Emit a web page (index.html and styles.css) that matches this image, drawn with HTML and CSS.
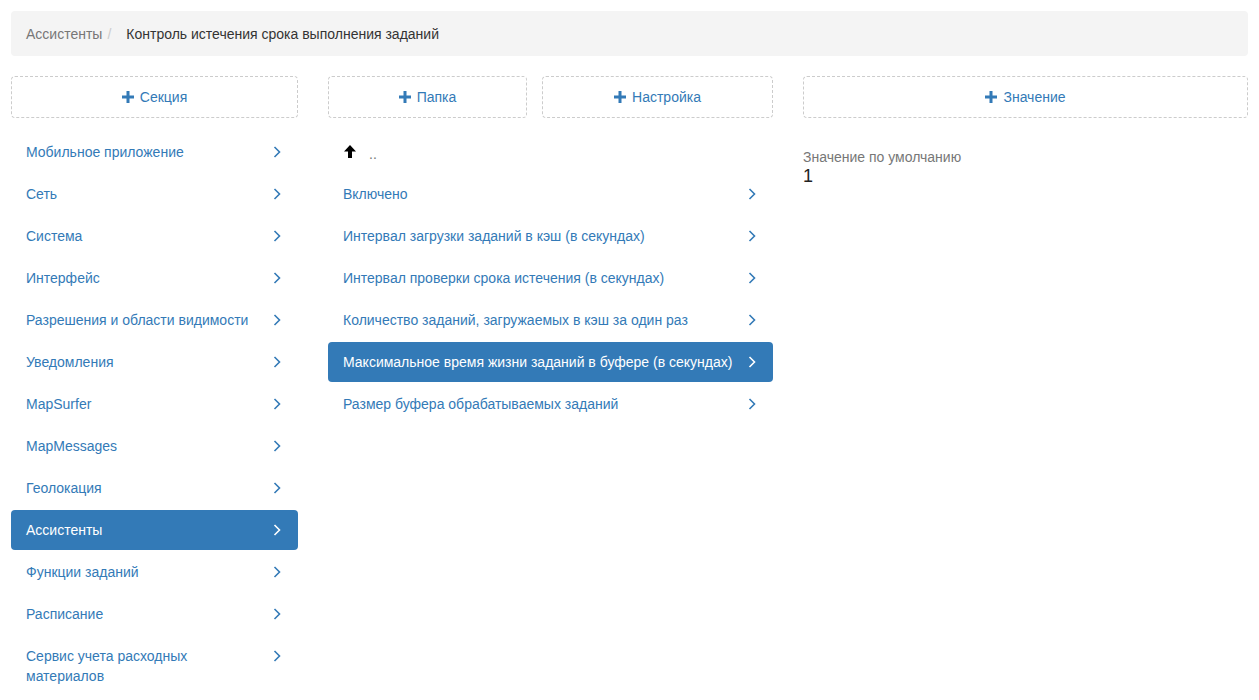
FILE: index.html
```html
<!DOCTYPE html>
<html lang="ru">
<head>
  <meta charset="UTF-8">
  <meta name="viewport" content="width=device-width, initial-scale=1.0">
  <title>Настройки</title>
  <link rel="stylesheet" href="styles.css">
</head>
<body>
  <div class="page">
    <ol class="breadcrumb">
      <li><a href="#">Ассистенты</a></li>
      <li class="active">Контроль истечения срока выполнения заданий</li>
    </ol>

    <div class="columns">
      <!-- sections -->
      <div class="column">
        <div class="actions">
          <a class="add-button" href="#"><svg class="plus" viewBox="0 0 12 12"><path d="M4.5 0h3v4.5H12v3H7.5V12h-3V7.5H0v-3h4.5z"/></svg>Секция</a>
        </div>
        <ul class="nav-list nav-list-narrow">
          <li><a href="#">Мобильное приложение<svg class="chevron" viewBox="0 0 8 12"><polyline points="1.5,1 6.5,6 1.5,11"/></svg></a></li>
          <li><a href="#">Сеть<svg class="chevron" viewBox="0 0 8 12"><polyline points="1.5,1 6.5,6 1.5,11"/></svg></a></li>
          <li><a href="#">Система<svg class="chevron" viewBox="0 0 8 12"><polyline points="1.5,1 6.5,6 1.5,11"/></svg></a></li>
          <li><a href="#">Интерфейс<svg class="chevron" viewBox="0 0 8 12"><polyline points="1.5,1 6.5,6 1.5,11"/></svg></a></li>
          <li><a href="#">Разрешения и области видимости<svg class="chevron" viewBox="0 0 8 12"><polyline points="1.5,1 6.5,6 1.5,11"/></svg></a></li>
          <li><a href="#">Уведомления<svg class="chevron" viewBox="0 0 8 12"><polyline points="1.5,1 6.5,6 1.5,11"/></svg></a></li>
          <li><a href="#">MapSurfer<svg class="chevron" viewBox="0 0 8 12"><polyline points="1.5,1 6.5,6 1.5,11"/></svg></a></li>
          <li><a href="#">MapMessages<svg class="chevron" viewBox="0 0 8 12"><polyline points="1.5,1 6.5,6 1.5,11"/></svg></a></li>
          <li><a href="#">Геолокация<svg class="chevron" viewBox="0 0 8 12"><polyline points="1.5,1 6.5,6 1.5,11"/></svg></a></li>
          <li class="active"><a href="#">Ассистенты<svg class="chevron" viewBox="0 0 8 12"><polyline points="1.5,1 6.5,6 1.5,11"/></svg></a></li>
          <li><a href="#">Функции заданий<svg class="chevron" viewBox="0 0 8 12"><polyline points="1.5,1 6.5,6 1.5,11"/></svg></a></li>
          <li><a href="#">Расписание<svg class="chevron" viewBox="0 0 8 12"><polyline points="1.5,1 6.5,6 1.5,11"/></svg></a></li>
          <li><a href="#">Сервис учета расходных материалов<svg class="chevron" viewBox="0 0 8 12"><polyline points="1.5,1 6.5,6 1.5,11"/></svg></a></li>
        </ul>
      </div>

      <!-- settings -->
      <div class="column">
        <div class="actions actions-split">
          <a class="add-button" href="#"><svg class="plus" viewBox="0 0 12 12"><path d="M4.5 0h3v4.5H12v3H7.5V12h-3V7.5H0v-3h4.5z"/></svg>Папка</a>
          <a class="add-button" href="#"><svg class="plus" viewBox="0 0 12 12"><path d="M4.5 0h3v4.5H12v3H7.5V12h-3V7.5H0v-3h4.5z"/></svg>Настройка</a>
        </div>
        <ul class="nav-list">
          <li class="up"><a href="#"><svg class="arrow-up" viewBox="0 0 12 13"><path d="M6 0L12 6.5H8V13H4V6.5H0z"/></svg><span class="dots">..</span></a></li>
          <li><a href="#">Включено<svg class="chevron" viewBox="0 0 8 12"><polyline points="1.5,1 6.5,6 1.5,11"/></svg></a></li>
          <li><a href="#">Интервал загрузки заданий в кэш (в секундах)<svg class="chevron" viewBox="0 0 8 12"><polyline points="1.5,1 6.5,6 1.5,11"/></svg></a></li>
          <li><a href="#">Интервал проверки срока истечения (в секундах)<svg class="chevron" viewBox="0 0 8 12"><polyline points="1.5,1 6.5,6 1.5,11"/></svg></a></li>
          <li><a href="#">Количество заданий, загружаемых в кэш за один раз<svg class="chevron" viewBox="0 0 8 12"><polyline points="1.5,1 6.5,6 1.5,11"/></svg></a></li>
          <li class="active"><a href="#">Максимальное время жизни заданий в буфере (в секундах)<svg class="chevron" viewBox="0 0 8 12"><polyline points="1.5,1 6.5,6 1.5,11"/></svg></a></li>
          <li><a href="#">Размер буфера обрабатываемых заданий<svg class="chevron" viewBox="0 0 8 12"><polyline points="1.5,1 6.5,6 1.5,11"/></svg></a></li>
        </ul>
      </div>

      <!-- values -->
      <div class="column">
        <div class="actions">
          <a class="add-button" href="#"><svg class="plus" viewBox="0 0 12 12"><path d="M4.5 0h3v4.5H12v3H7.5V12h-3V7.5H0v-3h4.5z"/></svg>Значение</a>
        </div>
        <div class="value-block">
          <div class="value-label">Значение по умолчанию</div>
          <div class="value">1</div>
        </div>
      </div>
    </div>
  </div>
</body>
</html>
```

FILE: styles.css
```css
/* Base */
body {
  margin: 0;
  font-family: "Liberation Sans", Arial, sans-serif;
  font-size: 14px;
  line-height: 20px;
  color: #333333;
  background-color: #ffffff;
}

a {
  color: #337ab7;
  text-decoration: none;
}

.page {
  padding: 11px 11px 0 11px;
}

/* Breadcrumb */
.breadcrumb {
  list-style: none;
  margin: 0 0 20px 0;
  padding: 13px 15px 12px 15px;
  background-color: #f4f4f4;
  border-radius: 4px;
  display: flex;
}

.breadcrumb a {
  color: #777777;
}

.breadcrumb li + li::before {
  content: "/";
  color: #cccccc;
  padding: 0 15px 0 5px;
}

.breadcrumb .active {
  color: #333333;
}

/* Columns */
.columns {
  display: grid;
  grid-template-columns: 287fr 445fr 445fr;
  gap: 30px;
  align-items: start;
}

.actions {
  display: grid;
  grid-template-columns: 1fr;
  margin-bottom: 14px;
}

.actions-split {
  grid-template-columns: 199fr 231fr;
  gap: 15px;
}

.add-button {
  display: flex;
  align-items: center;
  justify-content: center;
  height: 40px;
  border: 1px dashed #cccccc;
  border-radius: 4px;
}

.plus {
  width: 12px;
  height: 12px;
  fill: #337ab7;
  margin-right: 6px;
}

/* Lists */
.nav-list {
  list-style: none;
  margin: 0;
  padding: 0;
}

.nav-list li + li {
  margin-top: 2px;
}

.nav-list a {
  position: relative;
  display: block;
  padding: 10px 30px 10px 15px;
  border-radius: 4px;
}

.nav-list-narrow a {
  padding-right: 40px;
}

.nav-list .active a {
  background-color: #337ab7;
  color: #ffffff;
}

.chevron {
  position: absolute;
  right: 17px;
  top: 14px;
  width: 8px;
  height: 12px;
  fill: none;
  stroke: #337ab7;
  stroke-width: 1.6;
}

.nav-list .active .chevron {
  stroke: #ffffff;
}

.up a {
  display: flex;
  align-items: center;
  height: 20px;
}

.arrow-up {
  width: 12px;
  height: 13px;
  fill: #000000;
  margin-left: 1px;
  margin-top: -2px;
}

.dots {
  color: #777777;
  margin-left: 13px;
  margin-top: 4px;
}

/* Value */
.value-block {
  padding-top: 15px;
}

.value-label {
  color: #777777;
}

.value {
  font-size: 18px;
  line-height: 18px;
  color: #222222;
}
```
